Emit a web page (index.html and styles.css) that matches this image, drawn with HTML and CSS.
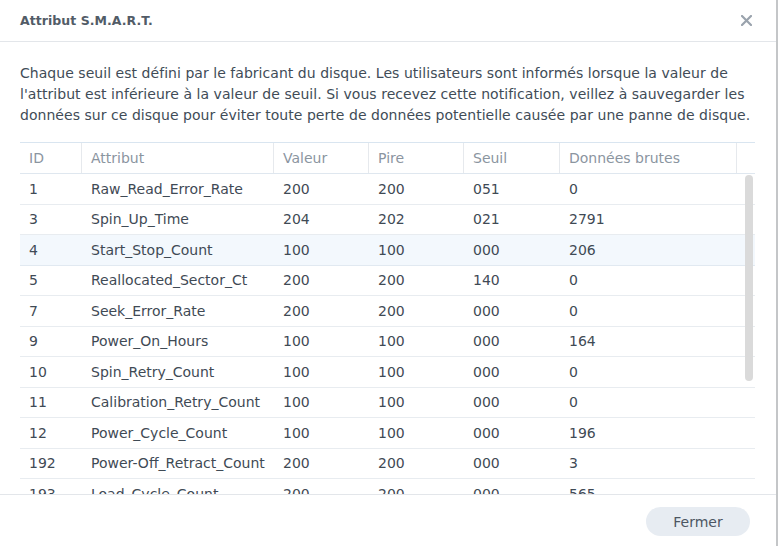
FILE: index.html
```html
<!DOCTYPE html>
<html lang="fr">
<head>
<meta charset="utf-8">
<title>Attribut S.M.A.R.T.</title>
<link rel="stylesheet" href="styles.css">
</head>
<body>
<div class="dialog">
  <div class="dlg-header">
    <span class="dlg-title">Attribut S.M.A.R.T.</span>
    <span class="dlg-close" aria-label="Fermer">
      <svg width="11" height="11" viewBox="0 0 11 11"><path d="M1 1 L10 10 M10 1 L1 10" stroke="#9aa3ad" stroke-width="2.2" stroke-linecap="round"/></svg>
    </span>
  </div>
  <div class="dlg-body">
    <p class="intro">Chaque seuil est défini par le fabricant du disque. Les utilisateurs sont informés lorsque la valeur de l'attribut est inférieure à la valeur de seuil. Si vous recevez cette notification, veillez à sauvegarder les données sur ce disque pour éviter toute perte de données potentielle causée par une panne de disque.</p>
    <div class="grid">
      <div class="grid-head">
        <div class="hcell">ID</div>
        <div class="hcell">Attribut</div>
        <div class="hcell">Valeur</div>
        <div class="hcell">Pire</div>
        <div class="hcell">Seuil</div>
        <div class="hcell">Données brutes</div>
        <div class="hcell last"></div>
      </div>
      <div class="grid-body">
        <div class="row"><div class="cell">1</div><div class="cell">Raw_Read_Error_Rate</div><div class="cell">200</div><div class="cell">200</div><div class="cell">051</div><div class="cell">0</div></div>
        <div class="row"><div class="cell">3</div><div class="cell">Spin_Up_Time</div><div class="cell">204</div><div class="cell">202</div><div class="cell">021</div><div class="cell">2791</div></div>
        <div class="row hover"><div class="cell">4</div><div class="cell">Start_Stop_Count</div><div class="cell">100</div><div class="cell">100</div><div class="cell">000</div><div class="cell">206</div></div>
        <div class="row"><div class="cell">5</div><div class="cell">Reallocated_Sector_Ct</div><div class="cell">200</div><div class="cell">200</div><div class="cell">140</div><div class="cell">0</div></div>
        <div class="row"><div class="cell">7</div><div class="cell">Seek_Error_Rate</div><div class="cell">200</div><div class="cell">200</div><div class="cell">000</div><div class="cell">0</div></div>
        <div class="row"><div class="cell">9</div><div class="cell">Power_On_Hours</div><div class="cell">100</div><div class="cell">100</div><div class="cell">000</div><div class="cell">164</div></div>
        <div class="row"><div class="cell">10</div><div class="cell">Spin_Retry_Count</div><div class="cell">100</div><div class="cell">100</div><div class="cell">000</div><div class="cell">0</div></div>
        <div class="row"><div class="cell">11</div><div class="cell">Calibration_Retry_Count</div><div class="cell">100</div><div class="cell">100</div><div class="cell">000</div><div class="cell">0</div></div>
        <div class="row"><div class="cell">12</div><div class="cell">Power_Cycle_Count</div><div class="cell">100</div><div class="cell">100</div><div class="cell">000</div><div class="cell">196</div></div>
        <div class="row"><div class="cell">192</div><div class="cell">Power-Off_Retract_Count</div><div class="cell">200</div><div class="cell">200</div><div class="cell">000</div><div class="cell">3</div></div>
        <div class="row"><div class="cell">193</div><div class="cell">Load_Cycle_Count</div><div class="cell">200</div><div class="cell">200</div><div class="cell">000</div><div class="cell">565</div></div>
        <div class="row"><div class="cell">194</div><div class="cell">Temperature_Celsius</div><div class="cell">100</div><div class="cell">100</div><div class="cell">000</div><div class="cell">35</div></div>
        <div class="scrollbar"></div>
      </div>
    </div>
  </div>
  <div class="dlg-footer">
    <button class="btn">Fermer</button>
  </div>
</div>
</body>
</html>
```

FILE: styles.css
```css
html, body {
  margin: 0;
  padding: 0;
  background: #ffffff;
}
body {
  font-family: "DejaVu Sans", Verdana, sans-serif;
  color: #3f4a55;
}
.dialog {
  box-sizing: border-box;
  width: 778px;
  height: 546px;
  border-right: 2px solid #c4c6c8;
  display: flex;
  flex-direction: column;
  overflow: hidden;
}
.dlg-header {
  height: 41px;
  flex: none;
  border-bottom: 1px solid #e3e6ea;
  display: flex;
  align-items: center;
  justify-content: space-between;
  padding: 0 24px 0 20px;
}
.dlg-title {
  font-size: 12.5px;
  font-weight: bold;
  color: #525c67;
  letter-spacing: 0.05px;
}
.dlg-close {
  display: flex;
  width: 11px;
  height: 11px;
}
.dlg-body {
  flex: 1;
  min-height: 0;
  overflow: hidden;
  padding: 0 21px 0 20px;
}
.intro {
  margin: 0;
  padding-top: 21px;
  height: 79px;
  font-size: 14px;
  line-height: 21px;
  letter-spacing: 0.04px;
  color: #414c57;
}
.grid {
  border-top: 1px solid #d9e5f0;
}
.grid-head {
  display: grid;
  grid-template-columns: 62px 192px 95px 95px 96px 177px 18px;
  height: 30px;
  border-bottom: 1px solid #dfe7ef;
}
.hcell {
  font-size: 14px;
  color: #8b959f;
  padding-left: 9px;
  display: flex;
  align-items: center;
  border-right: 1px solid #e6e9ed;
  white-space: nowrap;
}
.hcell.last {
  border-right: none;
}
.grid-body {
  position: relative;
}
.row {
  display: grid;
  grid-template-columns: 62px 192px 95px 95px 96px 177px 18px;
  height: 29.5px;
  border-bottom: 1px solid #e8ecf0;
}
.row.hover {
  background: #f3f8fd;
  border-bottom-color: #e1e9f1;
}
.cell {
  font-size: 14px;
  color: #3f4a55;
  padding-left: 9px;
  display: flex;
  align-items: center;
  white-space: nowrap;
}
.scrollbar {
  position: absolute;
  left: 725px;
  top: 1px;
  width: 8px;
  height: 206px;
  border-radius: 4px;
  background: #dadada;
}
.dlg-footer {
  height: 51px;
  flex: none;
  border-top: 1px solid #e3e6ea;
  display: flex;
  align-items: center;
  justify-content: flex-end;
  padding-right: 26px;
}
.btn {
  font-family: "DejaVu Sans", Verdana, sans-serif;
  font-size: 14px;
  color: #4c5662;
  background: #e7ecf2;
  border: none;
  border-radius: 15px;
  width: 104px;
  height: 29px;
  padding: 0;
  margin-top: 2px;
}
```
